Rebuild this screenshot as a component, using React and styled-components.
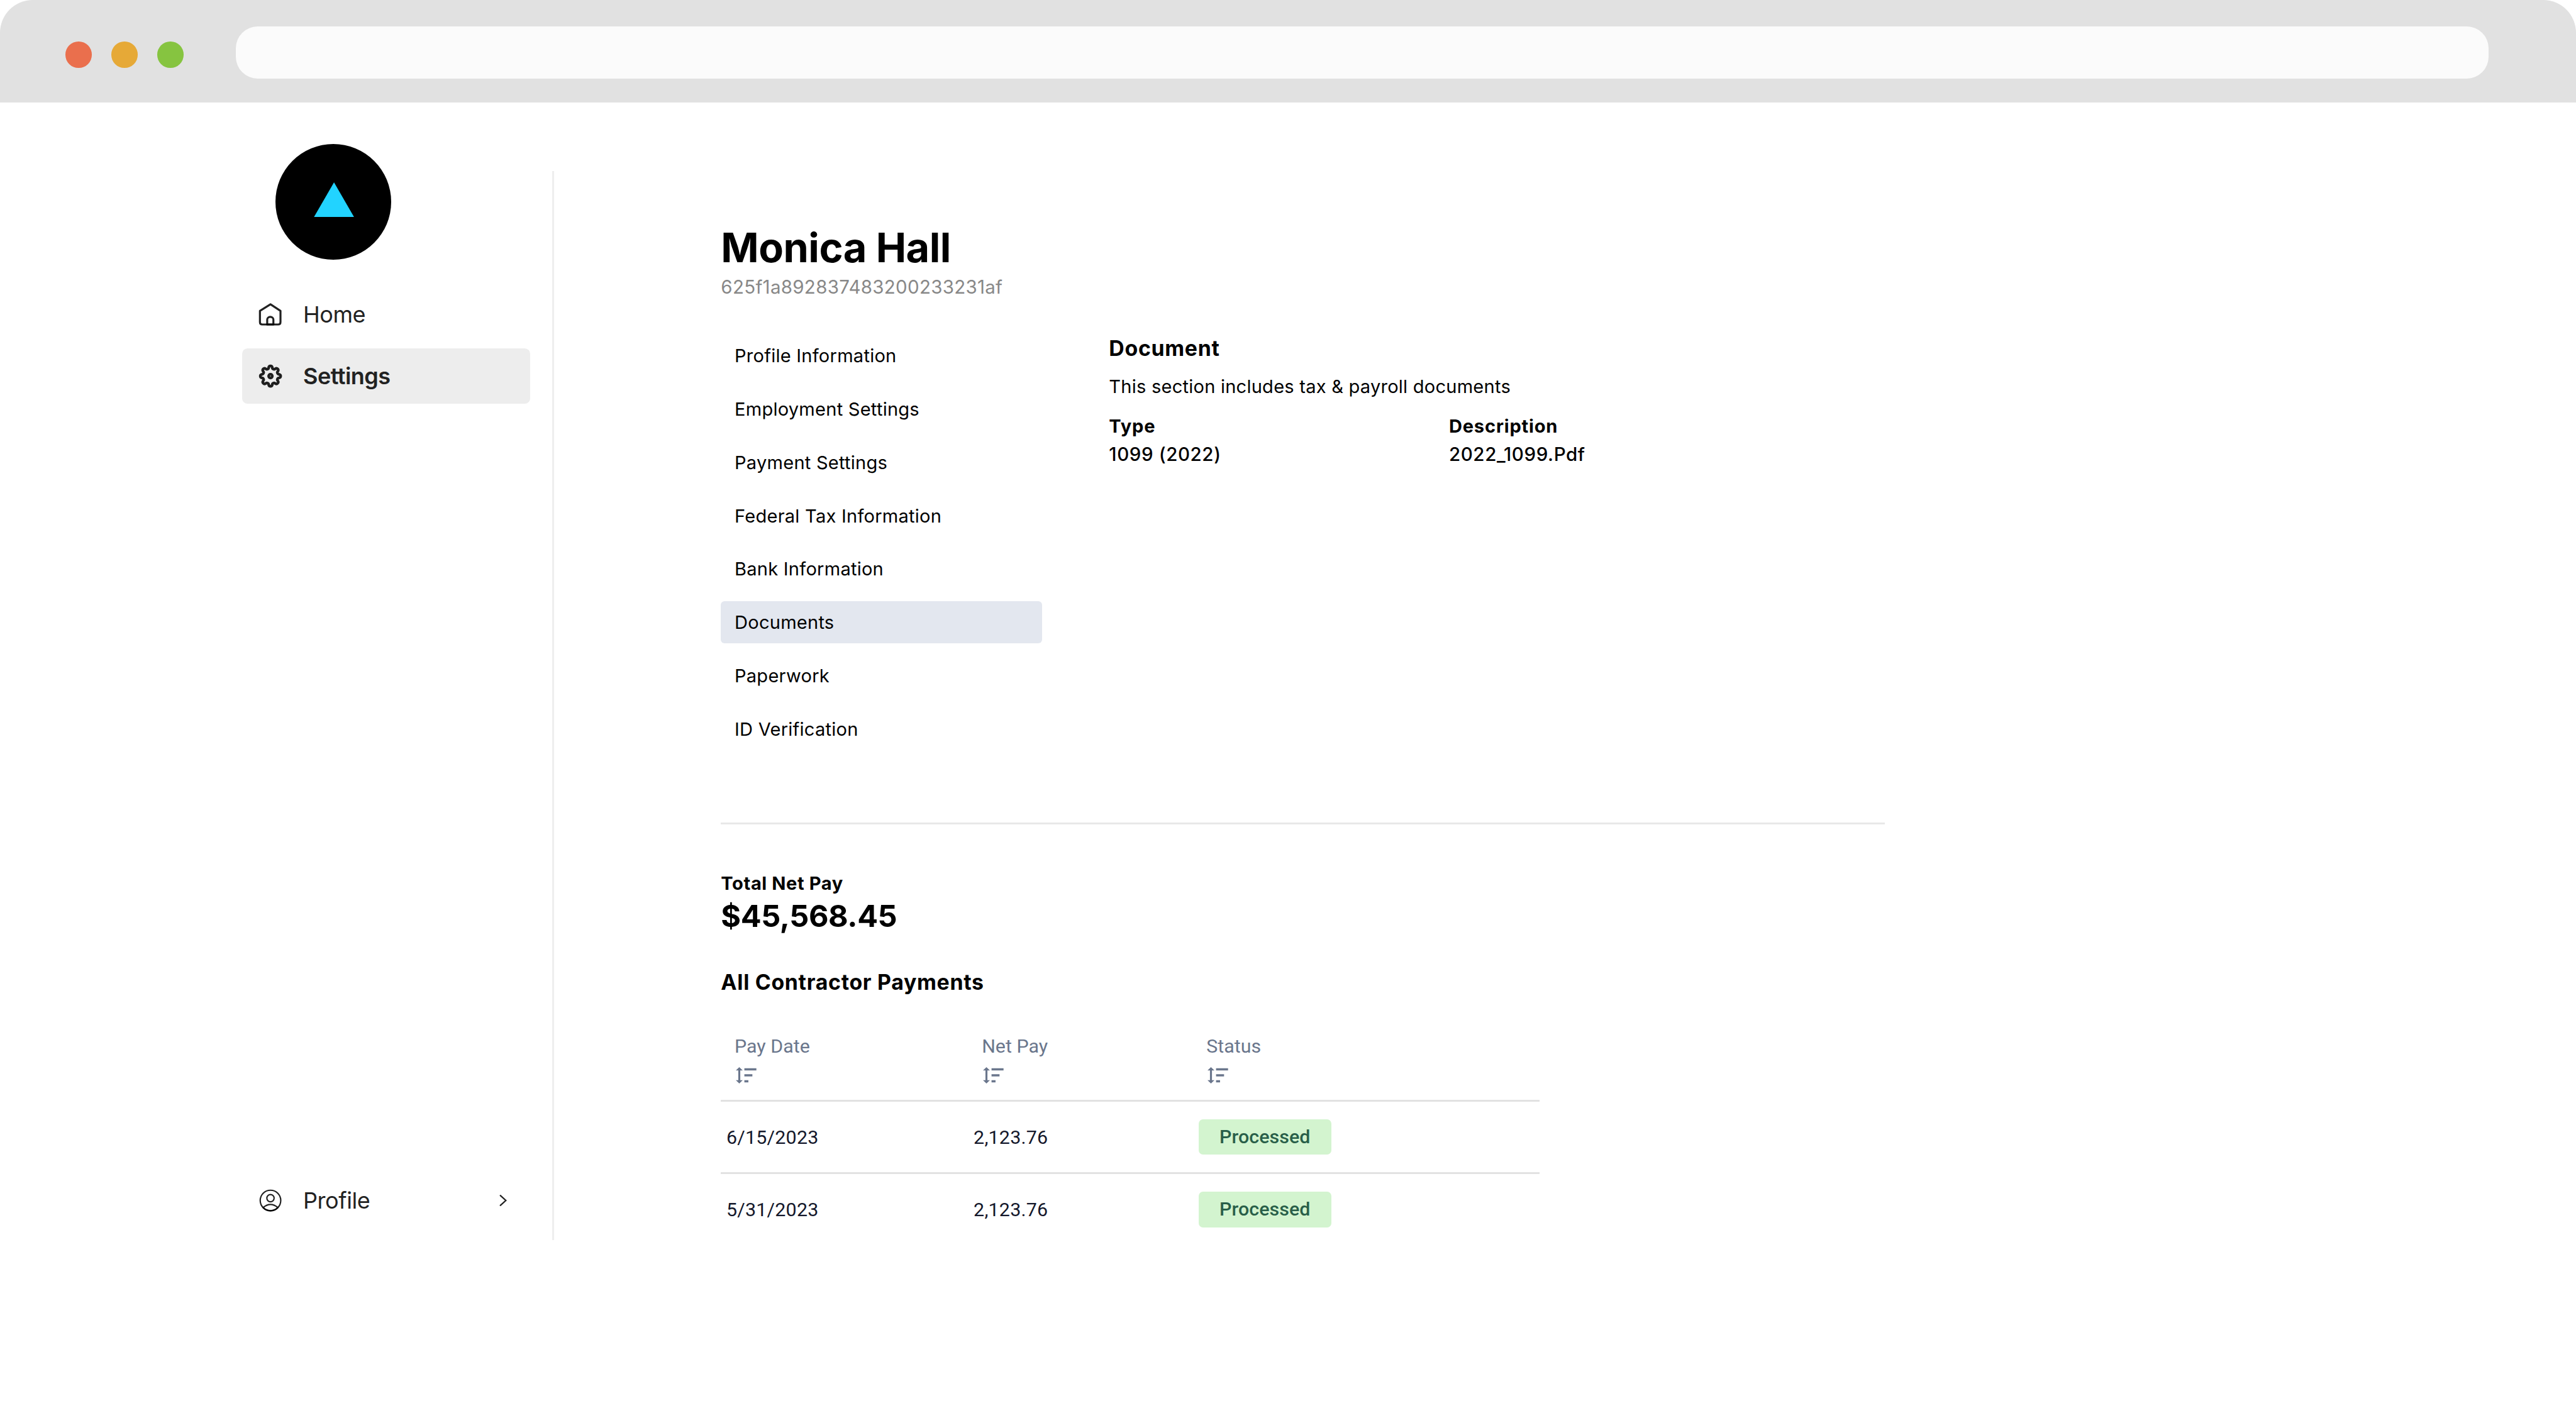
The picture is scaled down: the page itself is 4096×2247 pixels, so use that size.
import React from "react";
import styled, { createGlobalStyle } from "styled-components";

// 1rem is 10 design pixels, so the page scales with the window width
const GlobalStyle = createGlobalStyle`
  html {
    font-size: calc(100vw / 472);
  }

  body {
    margin: 0;
    background-color: #fff;
    color: #000;
    font-family: Inter, "Liberation Sans", sans-serif;
    overflow: hidden;
  }

  * {
    box-sizing: border-box;
  }
`;

const Window = styled.div`
  width: 100vw;
  height: 100vh;
  display: flex;
  flex-direction: column;
  overflow: hidden;
`;

const TitleBar = styled.header`
  flex: none;
  display: flex;
  align-items: flex-start;
  height: 18.8rem;
  padding: 4.8rem 16rem 0 12rem;
  background-color: #e1e1e1;
  border-radius: 6rem 6rem 0 0;
`;

const Lights = styled.div`
  display: flex;
  gap: 3.6rem;
  margin: 2.8rem 9.6rem 0 0;
`;

const Light = styled.span`
  width: 4.8rem;
  height: 4.8rem;
  border-radius: 50%;
  background-color: ${({ $color }) => $color};
`;

const AddressBar = styled.div`
  flex: 1;
  height: 9.6rem;
  border-radius: 4rem;
  background-color: #fbfbfb;
`;

const Body = styled.div`
  flex: 1;
  display: flex;
  align-items: flex-start;
  padding-left: 44.4rem;
`;

const Sidebar = styled.nav`
  display: flex;
  flex-direction: column;
  width: 52.7rem;
  height: 206.3rem;
  padding-top: 7.6rem;
`;

const Logo = styled.div`
  display: flex;
  justify-content: center;
  width: 21.2rem;
  height: 21.2rem;
  margin: 0 0 4.9rem 6.05rem;
  padding-top: 7rem;
  border-radius: 50%;
  background-color: #000;

  svg {
    width: 7.4rem;
    height: 6.4rem;
    margin-left: 0.2rem;
  }
`;

const NavItem = styled.a`
  flex: none;
  display: flex;
  align-items: center;
  height: 10.2rem;
  margin-bottom: 1.1rem;
  padding: 0 3.7rem 0 2.95rem;
  border-radius: 1rem;
  background-color: ${({ $active }) => ($active ? "#ededed" : "transparent")};
  color: #222;
  font-size: 4.15rem;
  font-weight: ${({ $active }) => ($active ? 570 : 380)};
  letter-spacing: ${({ $active }) => ($active ? "-0.06rem" : "-0.05rem")};

  &.bottom {
    margin-top: auto;
    margin-bottom: 0;
  }

  .label {
    flex: 1;
    margin-left: 3.8rem;
  }

  .chevron {
    width: 2.4rem;
    height: 3rem;
  }
`;

const NavIcon = styled.svg`
  width: 4.4rem;
  height: 4.4rem;
  fill: none;
  stroke: #000;
  stroke-opacity: 0.87;
  stroke-width: ${({ $stroke }) => $stroke};
  stroke-linejoin: round;
`;

const Divider = styled.div`
  width: 0.3rem;
  height: 195.9rem;
  margin: 12.5rem 0 0 4.1rem;
  background-color: #eee;
`;

const Main = styled.main`
  width: 213.3rem;
  margin-left: 30.6rem;
  padding-top: 22.6rem;
`;

const Name = styled.h1`
  margin: 0;
  font-size: 7.47rem;
  font-weight: 700;
  line-height: 8rem;
  letter-spacing: -0.057rem;
`;

const EmployeeId = styled.p`
  margin: 1.15rem 0 0;
  color: #888;
  font-size: 3.4rem;
  line-height: 4rem;
  letter-spacing: 0.033rem;
`;

const Details = styled.section`
  display: flex;
  height: 89.75rem;
  margin-top: 6.75rem;
  border-bottom: 3px solid #e8e8e8;
`;

const Menu = styled.ul`
  display: flex;
  flex-direction: column;
  gap: 2.02rem;
  width: 58.8rem;
  margin: 0;
  padding: 0;
  list-style: none;
`;

const MenuItem = styled.li`
  display: flex;
  align-items: center;
  height: 7.76rem;
  padding-left: 2.5rem;
  border-radius: 0.7rem;
  background-color: ${({ $active }) => ($active ? "#e3e7ef" : "transparent")};
  font-size: 3.35rem;
  letter-spacing: 0.027rem;
`;

const DocumentPanel = styled.div`
  margin-left: 12.3rem;
`;

const Heading = styled.h2`
  margin: 0;
  font-size: 3.9rem;
  font-weight: 700;
  line-height: 5rem;
  letter-spacing: 0.08rem;
`;

const Text = styled.p`
  margin: 2rem 0 2.25rem;
  font-size: 3.35rem;
  line-height: 5rem;
  letter-spacing: 0.026rem;
`;

const DocumentGrid = styled.div`
  display: grid;
  grid-template-columns: 62.3rem auto;
  row-gap: 0.22rem;
`;

const Label = styled.div`
  font-size: 3.35rem;
  font-weight: 700;
  line-height: 5rem;
  letter-spacing: ${({ $tight }) => ($tight ? "0.07rem" : "0.094rem")};
`;

const Value = styled.div`
  font-size: 3.4rem;
  font-weight: 500;
  line-height: 5rem;
  letter-spacing: 0.07rem;
`;

const Totals = styled.section`
  padding: 8.3rem 0 5.9rem;
`;

const Amount = styled.div`
  font-size: 5.6rem;
  font-weight: 700;
  line-height: 7.2rem;
  letter-spacing: -0.045rem;
`;

const TableRow = styled.div`
  display: grid;
  grid-template-columns: 45.3rem 41.15rem 1fr;
  align-items: center;
  width: 150rem;
  height: 13.25rem;
  border-bottom: 3px solid #e2e2e2;
  color: #14182b;
  font-family: Roboto, "Liberation Sans", sans-serif;
  font-size: 3.5rem;
  letter-spacing: 0.025rem;

  &:last-child {
    height: 12.95rem;
    border-bottom: none;
  }
`;

const TableHead = styled(TableRow)`
  align-items: start;
  height: 19.45rem;
  padding-top: 7.4rem;
  color: #6a768c;
  letter-spacing: 0.004rem;
`;

const HeadCell = styled.div`
  padding-left: 2.5rem;
  line-height: 4rem;

  svg {
    display: block;
    width: 3.9rem;
    height: 3rem;
    margin-top: 1.7rem;
    margin-left: 0.18rem;
  }
`;

const Cell = styled.div`
  padding-left: 1rem;
`;

const Badge = styled.span`
  display: flex;
  align-items: center;
  width: 24.35rem;
  height: 6.55rem;
  margin-left: 0.1rem;
  padding: 0 0 0.15rem 3.8rem;
  border-radius: 0.8rem;
  background-color: #d3f4cf;
  color: #295f49;
  font-weight: 500;
  letter-spacing: 0.011rem;
`;

// eight round teeth with scalloped gaps between them
const gearPath = () => {
  const point = (deg) => {
    const a = (deg * Math.PI) / 180;
    return `${(66 + 49 * Math.sin(a)).toFixed(2)} ${(66 - 49 * Math.cos(a)).toFixed(2)}`;
  };
  let d = `M${point(-11.5)}`;
  for (let i = 0; i < 8; i++) {
    d += `A10 10 0 0 1 ${point(i * 45 + 11.5)}A10 10 0 0 0 ${point(i * 45 + 33.5)}`;
  }
  return `${d}Z`;
};

const HomeIcon = () => (
  <NavIcon viewBox="0 0 132 132" $stroke={11}>
    <path d="M66 10L121 46V108Q121 121 108 121H21Q8 121 8 108V46Z" />
    <path d="M48 121V94A17 15 0 0 1 82 94V121Z" />
  </NavIcon>
);

const SettingsIcon = () => (
  <NavIcon viewBox="0 0 132 132" $stroke={15}>
    <path d={gearPath()} />
    <circle cx="66" cy="66" r="10" />
  </NavIcon>
);

const ProfileIcon = () => (
  <NavIcon viewBox="0 0 132 132" $stroke={7.5}>
    <circle cx="66" cy="66" r="56.5" />
    <circle cx="66" cy="53" r="20" />
    <path d="M25.5 105Q66 71 106.5 105A56.5 56.5 0 0 1 25.5 105Z" />
  </NavIcon>
);

const SortIcon = () => (
  <svg viewBox="0 0 117 90" fill="#6a768c">
    <path d="M19 0L38 18H24.5V72H38L19 90L0 72H13.5V18H0Z" />
    <path d="M47 6H113V18H47ZM47 39H91V51H47ZM47 72H69V84H47Z" />
  </svg>
);

const menu = [
  "Profile Information",
  "Employment Settings",
  "Payment Settings",
  "Federal Tax Information",
  "Bank Information",
  "Documents",
  "Paperwork",
  "ID Verification",
];

const columns = ["Pay Date", "Net Pay", "Status"];

const payments = [
  { date: "6/15/2023", net: "2,123.76", status: "Processed" },
  { date: "5/31/2023", net: "2,123.76", status: "Processed" },
];

const App = () => {
  return (
    <Window>
      <GlobalStyle />
      <TitleBar>
        <Lights>
          <Light $color="#ea6f4d" />
          <Light $color="#e6a937" />
          <Light $color="#86c440" />
        </Lights>
        <AddressBar />
      </TitleBar>

      <Body>
        <Sidebar>
          <Logo>
            <svg viewBox="0 0 74 64">
              <path d="M37 0L74 64H0Z" fill="#22d3ff" />
            </svg>
          </Logo>
          <NavItem>
            <HomeIcon />
            <span className="label">Home</span>
          </NavItem>
          <NavItem $active>
            <SettingsIcon />
            <span className="label">Settings</span>
          </NavItem>
          <NavItem className="bottom">
            <ProfileIcon />
            <span className="label">Profile</span>
            <svg className="chevron" viewBox="0 0 24 30">
              <path
                d="M6.5 6L16.5 15L6.5 24"
                fill="none"
                stroke="#222"
                strokeWidth="2.6"
                strokeLinecap="round"
              />
            </svg>
          </NavItem>
        </Sidebar>
        <Divider />

        <Main>
          <Name>Monica Hall</Name>
          <EmployeeId>625f1a892837483200233231af</EmployeeId>

          <Details>
            <Menu>
              {menu.map((item) => (
                <MenuItem key={item} $active={item === "Documents"}>
                  {item}
                </MenuItem>
              ))}
            </Menu>
            <DocumentPanel>
              <Heading>Document</Heading>
              <Text>This section includes tax &amp; payroll documents</Text>
              <DocumentGrid>
                <Label>Type</Label>
                <Label>Description</Label>
                <Value>1099 (2022)</Value>
                <Value>2022_1099.Pdf</Value>
              </DocumentGrid>
            </DocumentPanel>
          </Details>

          <Totals>
            <Label $tight>Total Net Pay</Label>
            <Amount>$45,568.45</Amount>
          </Totals>

          <Heading>All Contractor Payments</Heading>
          <div>
            <TableHead>
              {columns.map((column) => (
                <HeadCell key={column}>
                  {column}
                  <SortIcon />
                </HeadCell>
              ))}
            </TableHead>
            {payments.map((payment) => (
              <TableRow key={payment.date}>
                <Cell>{payment.date}</Cell>
                <Cell>{payment.net}</Cell>
                <Cell>
                  <Badge>{payment.status}</Badge>
                </Cell>
              </TableRow>
            ))}
          </div>
        </Main>
      </Body>
    </Window>
  );
};

export default App;
